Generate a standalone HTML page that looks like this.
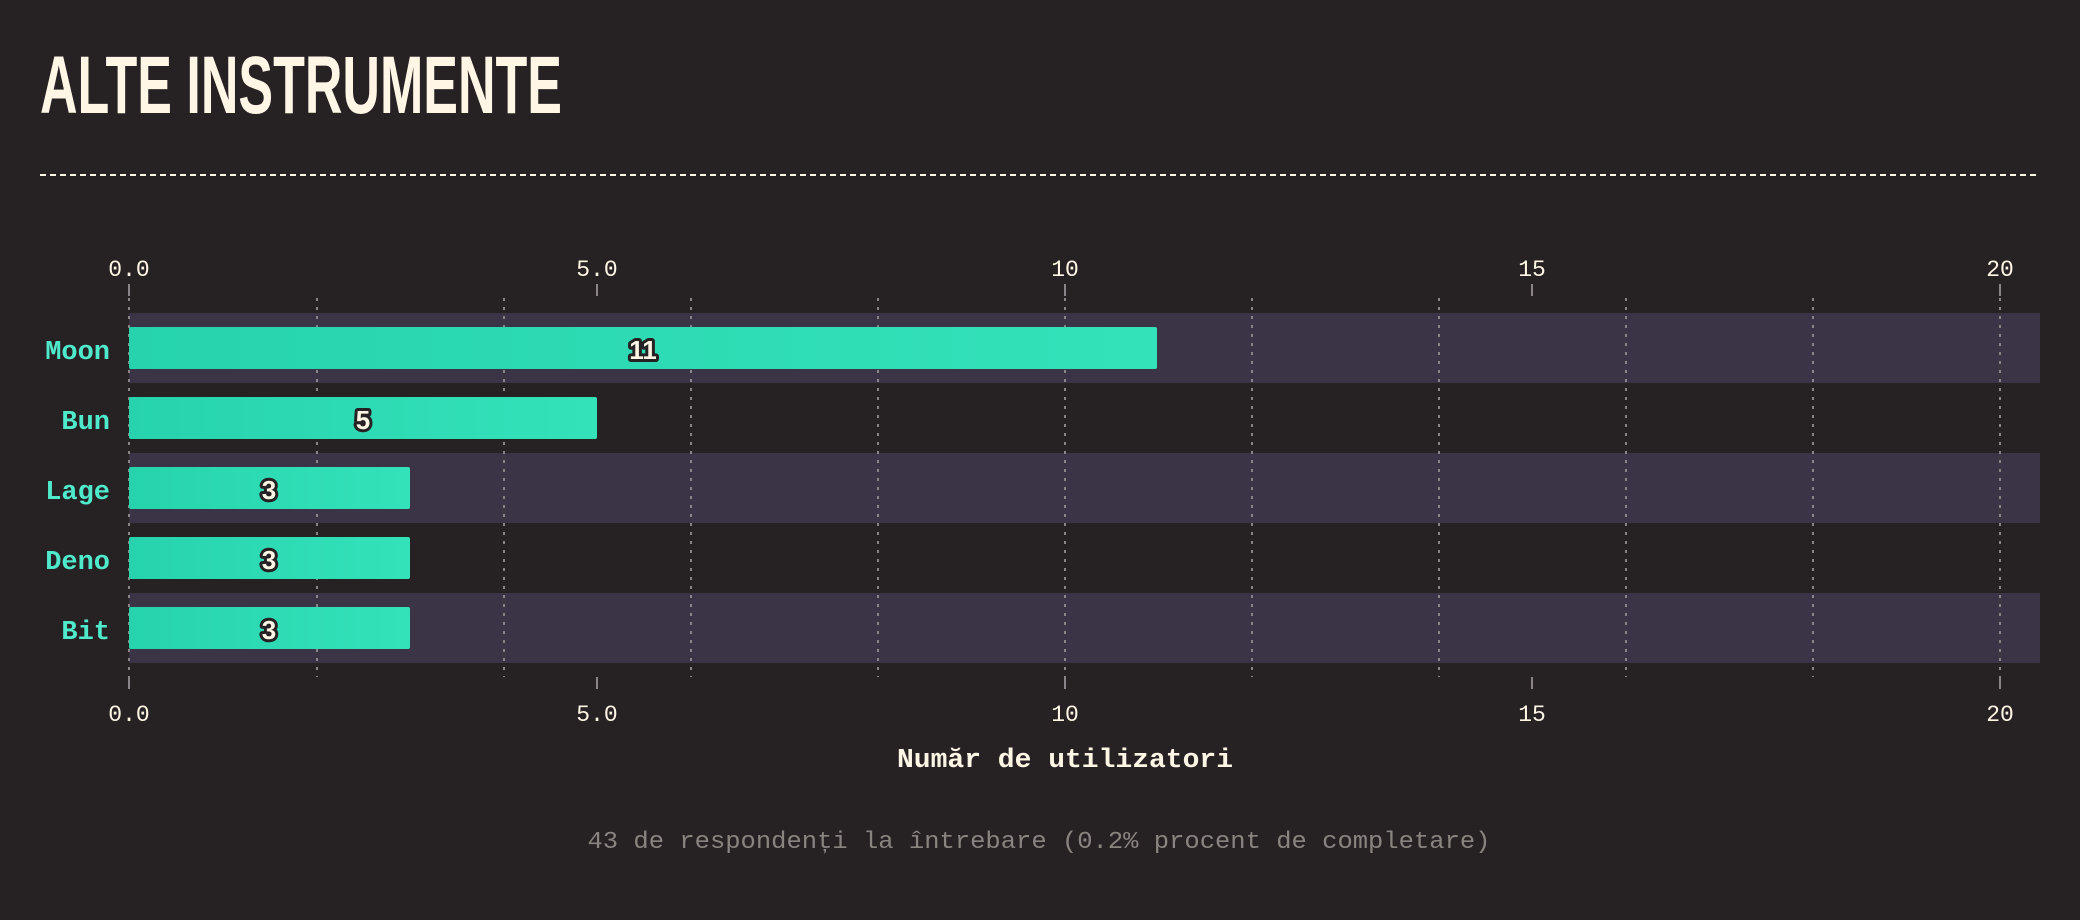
<!DOCTYPE html>
<html><head><meta charset="utf-8"><style>
html,body{margin:0;padding:0;background:#262224;width:2080px;height:920px;overflow:hidden}
</style></head><body>
<svg width="2080" height="920" viewBox="0 0 2080 920" xmlns="http://www.w3.org/2000/svg">
<defs>
<linearGradient id="g" x1="0" x2="1" y1="0" y2="0"><stop offset="0" stop-color="#26d3ad"/><stop offset="1" stop-color="#34e2ba"/></linearGradient>
</defs>
<text x="40" y="113" font-family="Liberation Sans Narrow, Liberation Sans, sans-serif" font-weight="bold" font-size="82" fill="#fff6e6" textLength="522" lengthAdjust="spacingAndGlyphs">ALTE INSTRUMENTE</text>
<line x1="40" y1="175" x2="2040" y2="175" stroke="#fff6e6" stroke-width="2" stroke-dasharray="6,4"/>
<g fill="#3a3446">
<rect x="129" y="313" width="1911" height="70"/>
<rect x="129" y="453" width="1911" height="70"/>
<rect x="129" y="593" width="1911" height="70"/>
</g>
<g stroke="#8a8488" stroke-width="2" stroke-dasharray="3,6">
<line x1="129" y1="298" x2="129" y2="677"/>
<line x1="317" y1="298" x2="317" y2="677"/>
<line x1="504" y1="298" x2="504" y2="677"/>
<line x1="691" y1="298" x2="691" y2="677"/>
<line x1="878" y1="298" x2="878" y2="677"/>
<line x1="1065" y1="298" x2="1065" y2="677"/>
<line x1="1252" y1="298" x2="1252" y2="677"/>
<line x1="1439" y1="298" x2="1439" y2="677"/>
<line x1="1626" y1="298" x2="1626" y2="677"/>
<line x1="1813" y1="298" x2="1813" y2="677"/>
<line x1="2000" y1="298" x2="2000" y2="677"/>
</g>
<g stroke="#8a8488" stroke-width="2">
<line x1="129" y1="284" x2="129" y2="296"/><line x1="597" y1="284" x2="597" y2="296"/><line x1="1065" y1="284" x2="1065" y2="296"/><line x1="1532" y1="284" x2="1532" y2="296"/><line x1="2000" y1="284" x2="2000" y2="296"/>
<line x1="129" y1="677" x2="129" y2="689"/><line x1="597" y1="677" x2="597" y2="689"/><line x1="1065" y1="677" x2="1065" y2="689"/><line x1="1532" y1="677" x2="1532" y2="689"/><line x1="2000" y1="677" x2="2000" y2="689"/>
</g>
<g font-family="Liberation Mono, monospace" font-size="23" fill="#fff6e6" text-anchor="middle">
<text x="129" y="276">0.0</text><text x="597" y="276">5.0</text><text x="1065" y="276">10</text><text x="1532" y="276">15</text><text x="2000" y="276">20</text>
<text x="129" y="721">0.0</text><text x="597" y="721">5.0</text><text x="1065" y="721">10</text><text x="1532" y="721">15</text><text x="2000" y="721">20</text>
</g>
<g fill="url(#g)">
<rect x="129" y="327" width="1028" height="42" rx="2"/>
<rect x="129" y="397" width="468" height="42" rx="2"/>
<rect x="129" y="467" width="281" height="42" rx="2"/>
<rect x="129" y="537" width="281" height="42" rx="2"/>
<rect x="129" y="607" width="281" height="42" rx="2"/>
</g>
<g font-family="Liberation Mono, monospace" font-weight="bold" font-size="27" fill="#4eeacb" text-anchor="end">
<text x="110" y="359">Moon</text><text x="110" y="429">Bun</text><text x="110" y="499">Lage</text><text x="110" y="569">Deno</text><text x="110" y="639">Bit</text>
</g>
<g font-family="Liberation Sans, sans-serif" font-weight="bold" font-size="26" fill="#fff6e6" stroke="#262224" stroke-width="6" paint-order="stroke" stroke-linejoin="round" text-anchor="middle">
<text x="643" y="359">11</text><text x="363" y="429">5</text><text x="269" y="499">3</text><text x="269" y="569">3</text><text x="269" y="639">3</text>
</g>
<text x="1065" y="767" font-family="Liberation Mono, monospace" font-weight="bold" font-size="27" fill="#fff6e6" text-anchor="middle" textLength="336" lengthAdjust="spacingAndGlyphs">Număr de utilizatori</text>
<text x="1039" y="848" font-family="Liberation Mono, monospace" font-size="24" fill="#8a8480" text-anchor="middle" textLength="903" lengthAdjust="spacingAndGlyphs">43 de respondenți la întrebare (0.2% procent de completare)</text>
</svg>
</body></html>
